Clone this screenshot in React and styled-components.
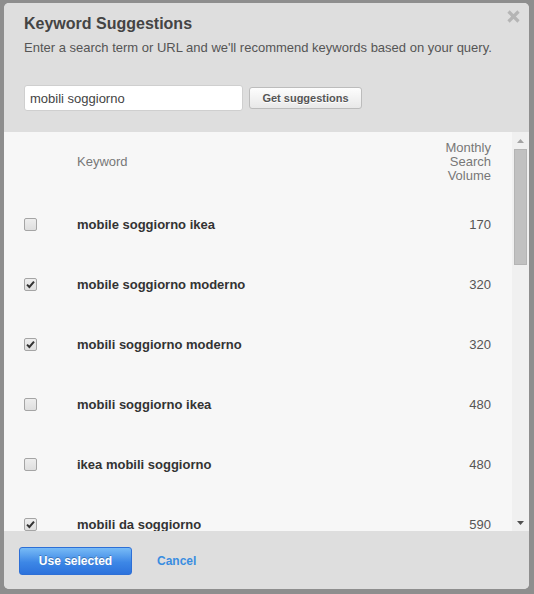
import React from "react";
import styled, { createGlobalStyle } from "styled-components";

const Global = createGlobalStyle`
  html, body { margin: 0; padding: 0; }
  body {
    background: #8e8e8e;
    font-family: "Liberation Sans", Arial, sans-serif;
    width: 534px;
    height: 594px;
    overflow: hidden;
  }
`;

const Modal = styled.div`
  margin: 3px 0 0 4px;
  width: 525px;
  height: 586px;
  border-radius: 5px;
  overflow: hidden;
  display: flex;
  flex-direction: column;
  background: #dedede;
`;

const Header = styled.div`
  position: relative;
  padding: 11px 20px 21px;
  background: #dedede;
`;

const Title = styled.h1`
  margin: 0;
  font-size: 16px;
  line-height: 20px;
  font-weight: bold;
  color: #444;
`;

const Subtitle = styled.p`
  margin: 5px 0 0;
  font-size: 13px;
  line-height: 18px;
  color: #555;
`;

const Close = styled.button`
  position: absolute;
  top: 7px;
  right: 9px;
  width: 13px;
  height: 13px;
  padding: 0;
  border: 0;
  background: none;
  display: flex;
`;

const SearchRow = styled.div`
  display: flex;
  align-items: center;
  gap: 6px;
  margin-top: 28px;
`;

const Input = styled.input`
  box-sizing: border-box;
  width: 219px;
  height: 26px;
  border: 1px solid #cfcfcf;
  border-radius: 3px;
  background: #fff;
  padding: 0 5px;
  font-family: "Liberation Sans", Arial, sans-serif;
  font-size: 13px;
  color: #444;
  outline: none;
`;

const GrayButton = styled.button`
  box-sizing: border-box;
  width: 113px;
  height: 22px;
  border: 1px solid #bcbcbc;
  border-radius: 3px;
  background: linear-gradient(#fdfdfd, #e8e8e8);
  font-family: "Liberation Sans", Arial, sans-serif;
  font-size: 11px;
  font-weight: bold;
  color: #555;
  text-shadow: 0 1px 0 #fff;
  padding: 0;
`;

const TableArea = styled.div`
  display: flex;
  height: 399px;
  background: #f7f7f7;
`;

const List = styled.div`
  flex: 1;
  overflow: hidden;
`;

const Row = styled.div`
  display: grid;
  grid-template-columns: 53px 1fr auto;
  align-items: center;
  height: 60px;
  padding: ${(p) => (p.$head ? "0 21px 2px 20px" : "0 21px 0 20px")};
`;

const HeadCell = styled.div`
  font-size: 13px;
  line-height: 14px;
  color: #777;
  text-align: ${(p) => (p.$right ? "right" : "left")};
`;

const KeywordCell = styled.div`
  font-size: 13px;
  font-weight: bold;
  color: #333;
`;

const NumberCell = styled.div`
  font-size: 13px;
  color: #555;
  text-align: right;
`;

const Box = styled.span`
  box-sizing: border-box;
  width: 13px;
  height: 13px;
  border: 1px solid #a5a5a5;
  border-radius: 2px;
  background: linear-gradient(#eeeeee, #dedede);
  display: flex;
  align-items: center;
  justify-content: center;
`;

const Scrollbar = styled.div`
  width: 17px;
  background: #f0f0f0;
  display: flex;
  flex-direction: column;
`;

const Arrow = styled.div`
  height: 17px;
  display: flex;
  align-items: center;
  justify-content: center;
`;

const Track = styled.div`
  flex: 1;
  padding: 0 2px;
`;

const Thumb = styled.div`
  box-sizing: border-box;
  height: 116px;
  background: #c1c1c1;
  border: 1px solid #b4b4b4;
`;

const Footer = styled.div`
  flex: 1;
  display: flex;
  align-items: flex-start;
  padding: 16px 15px 0;
  background: #dedede;
`;

const BlueButton = styled.button`
  box-sizing: border-box;
  width: 113px;
  height: 28px;
  border: 1px solid #2d6fd6;
  border-radius: 3px;
  background: linear-gradient(#78bbf6, #3d87e6 55%, #2c72dc);
  font-family: "Liberation Sans", Arial, sans-serif;
  font-size: 12px;
  font-weight: bold;
  color: #fff;
  text-shadow: 0 -1px 0 rgba(0, 0, 0, 0.25);
  padding: 0;
`;

const LinkButton = styled.button`
  margin-left: 25px;
  height: 28px;
  border: 0;
  background: none;
  padding: 0;
  font-family: "Liberation Sans", Arial, sans-serif;
  font-size: 12px;
  font-weight: bold;
  color: #3a8de0;
`;

const rows = [
  ["mobile soggiorno ikea", 170, false],
  ["mobile soggiorno moderno", 320, true],
  ["mobili soggiorno moderno", 320, true],
  ["mobili soggiorno ikea", 480, false],
  ["ikea mobili soggiorno", 480, false],
  ["mobili da soggiorno", 590, true],
];

function Checkbox({ checked }) {
  return (
    <Box>
      {checked && (
        <svg width="9" height="9" viewBox="0 0 9 9">
          <path d="M1 4.6 L3.4 7 L8 1.6" fill="none" stroke="#333" strokeWidth="2" />
        </svg>
      )}
    </Box>
  );
}

export default function App() {
  return (
    <>
      <Global />
      <Modal>
        <Header>
          <Title>Keyword Suggestions</Title>
          <Subtitle>Enter a search term or URL and we'll recommend keywords based on your query.</Subtitle>
          <Close aria-label="close">
            <svg width="13" height="13" viewBox="0 0 13 13">
              <path d="M1.5 1.5 L11.5 11.5 M11.5 1.5 L1.5 11.5" stroke="#b5b5b5" strokeWidth="3.2" />
            </svg>
          </Close>
          <SearchRow>
            <Input defaultValue="mobili soggiorno" />
            <GrayButton>Get suggestions</GrayButton>
          </SearchRow>
        </Header>
        <TableArea>
          <List>
            <Row $head>
              <span />
              <HeadCell>Keyword</HeadCell>
              <HeadCell $right>
                Monthly
                <br />
                Search
                <br />
                Volume
              </HeadCell>
            </Row>
            {rows.map(([k, v, c]) => (
              <Row key={k}>
                <Checkbox checked={c} />
                <KeywordCell>{k}</KeywordCell>
                <NumberCell>{v}</NumberCell>
              </Row>
            ))}
          </List>
          <Scrollbar>
            <Arrow>
              <svg width="7" height="4" viewBox="0 0 7 4">
                <path d="M0 4 L3.5 0 L7 4 Z" fill="#a3a3a3" />
              </svg>
            </Arrow>
            <Track>
              <Thumb />
            </Track>
            <Arrow>
              <svg width="7" height="4" viewBox="0 0 7 4">
                <path d="M0 0 L7 0 L3.5 4 Z" fill="#505050" />
              </svg>
            </Arrow>
          </Scrollbar>
        </TableArea>
        <Footer>
          <BlueButton>Use selected</BlueButton>
          <LinkButton>Cancel</LinkButton>
        </Footer>
      </Modal>
    </>
  );
}
